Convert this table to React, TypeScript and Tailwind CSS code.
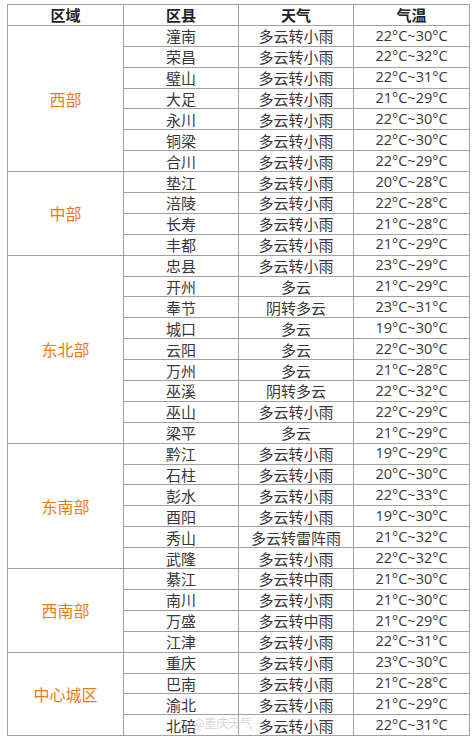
import React from "react";

type Row = [string, string, string];
const groups: { name: string; rows: Row[] }[] = [
  {
    name: "西部",
    rows: [
      ["潼南", "多云转小雨", "22°C~30°C"],
      ["荣昌", "多云转小雨", "22°C~32°C"],
      ["璧山", "多云转小雨", "22°C~31°C"],
      ["大足", "多云转小雨", "21°C~29°C"],
      ["永川", "多云转小雨", "22°C~30°C"],
      ["铜梁", "多云转小雨", "22°C~30°C"],
      ["合川", "多云转小雨", "22°C~29°C"],
    ],
  },
  {
    name: "中部",
    rows: [
      ["垫江", "多云转小雨", "20°C~28°C"],
      ["涪陵", "多云转小雨", "22°C~28°C"],
      ["长寿", "多云转小雨", "21°C~28°C"],
      ["丰都", "多云转小雨", "21°C~29°C"],
    ],
  },
  {
    name: "东北部",
    rows: [
      ["忠县", "多云转小雨", "23°C~29°C"],
      ["开州", "多云", "21°C~29°C"],
      ["奉节", "阴转多云", "23°C~31°C"],
      ["城口", "多云", "19°C~30°C"],
      ["云阳", "多云", "22°C~30°C"],
      ["万州", "多云", "21°C~28°C"],
      ["巫溪", "阴转多云", "22°C~32°C"],
      ["巫山", "多云转小雨", "22°C~29°C"],
      ["梁平", "多云", "21°C~29°C"],
    ],
  },
  {
    name: "东南部",
    rows: [
      ["黔江", "多云转小雨", "19°C~29°C"],
      ["石柱", "多云转小雨", "20°C~30°C"],
      ["彭水", "多云转小雨", "22°C~33°C"],
      ["酉阳", "多云转小雨", "19°C~30°C"],
      ["秀山", "多云转雷阵雨", "21°C~32°C"],
      ["武隆", "多云转小雨", "22°C~32°C"],
    ],
  },
  {
    name: "西南部",
    rows: [
      ["綦江", "多云转中雨", "21°C~30°C"],
      ["南川", "多云转小雨", "21°C~30°C"],
      ["万盛", "多云转中雨", "21°C~29°C"],
      ["江津", "多云转小雨", "22°C~31°C"],
    ],
  },
  {
    name: "中心城区",
    rows: [
      ["重庆", "多云转小雨", "23°C~30°C"],
      ["巴南", "多云转小雨", "21°C~28°C"],
      ["渝北", "多云转小雨", "21°C~29°C"],
      ["北碚", "多云转小雨", "22°C~31°C"],
    ],
  },
];

const cell =
  "border border-[#a0a0a0] text-center align-middle p-0 leading-none";

export default function App() {
  return (
    <div
      className="relative w-[474px] h-[743px] bg-white pt-[4px] pl-[7px]"
      style={{ fontFamily: '"Noto Sans CJK SC", "Noto Sans", sans-serif' }}
    >
      <table className="border-collapse table-fixed w-[462px] text-[#383838] text-[15px]">
        <colgroup>
          <col className="w-[116px]" />
          <col className="w-[115px]" />
          <col className="w-[115px]" />
          <col className="w-[116px]" />
        </colgroup>
        <thead>
          <tr className="h-[20.9px]">
            {["区域", "区县", "天气", "气温"].map((h) => (
              <th key={h} className={`${cell} font-bold text-[15px] text-[#222]`}>
                {h}
              </th>
            ))}
          </tr>
        </thead>
        <tbody>
          {groups.map((g) =>
            g.rows.map((r, i) => (
              <tr key={g.name + r[0]} className="h-[20.9px]">
                {i === 0 && (
                  <td
                    rowSpan={g.rows.length}
                    className={`${cell} text-[#ee7a16] text-[16px]`}
                  >
                    {g.name}
                  </td>
                )}
                <td className={cell}>{r[0]}</td>
                <td className={cell}>{r[1]}</td>
                <td
                  className={`${cell} text-[14.5px]`}
                  style={{ fontFamily: '"Open Sans", "Noto Sans", sans-serif' }}
                >
                  {r[2]}
                </td>
              </tr>
            ))
          )}
        </tbody>
      </table>
      <div className="absolute left-[193px] top-[714px] text-[12px] text-[#c8c8c8] opacity-70">
        @重庆天气
      </div>
    </div>
  );
}
